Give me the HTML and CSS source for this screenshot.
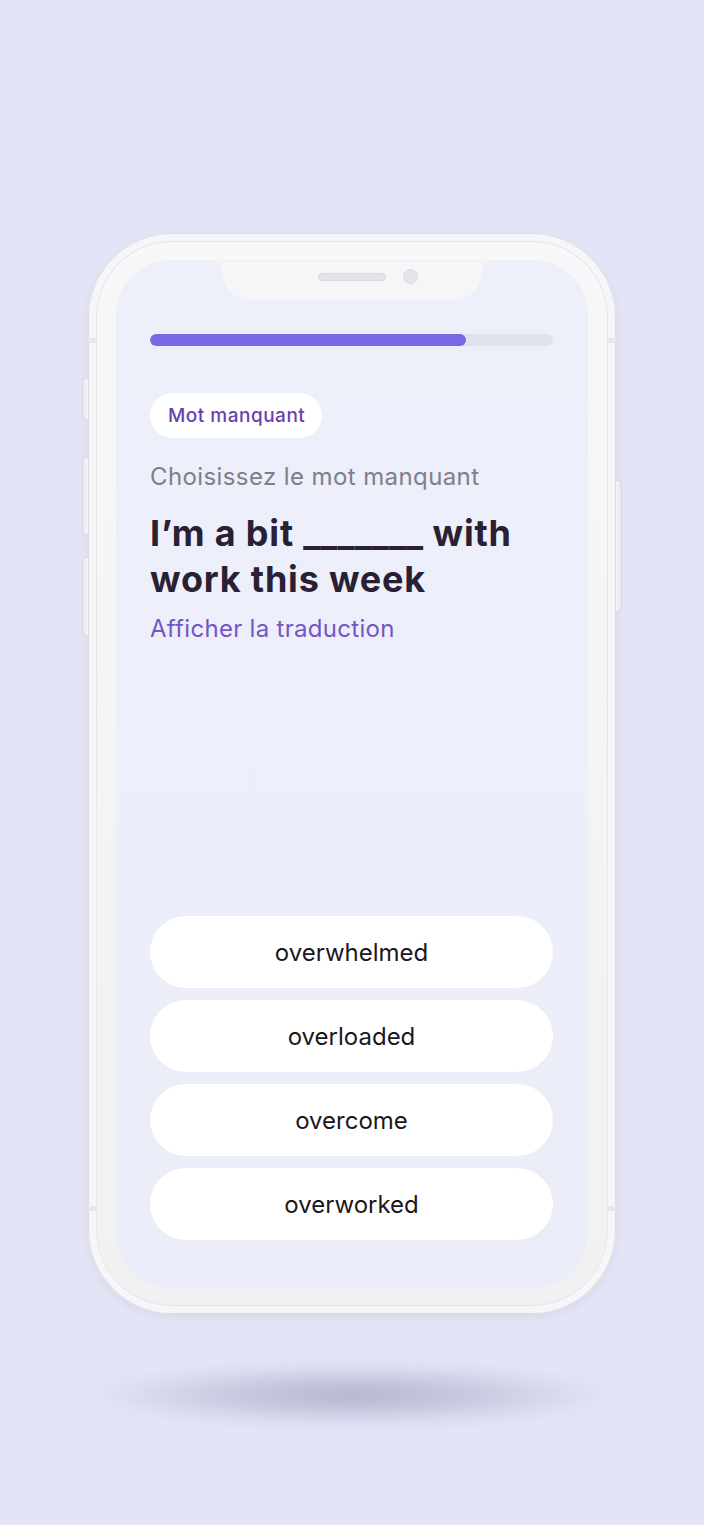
FILE: index.html
```html
<!DOCTYPE html>
<html lang="fr">
<head>
<meta charset="utf-8">
<title>Mot manquant</title>
<link rel="stylesheet" href="styles.css">
</head>
<body>
<div class="stage">
  <div class="phone">
    <span class="btn btn-mute"></span>
    <span class="btn btn-vol-up"></span>
    <span class="btn btn-vol-down"></span>
    <span class="btn btn-power"></span>
    <span class="band band-tl"></span>
    <span class="band band-tr"></span>
    <span class="band band-bl"></span>
    <span class="band band-br"></span>
    <div class="screen">
      <div class="notch">
        <span class="speaker"></span>
        <span class="camera"></span>
      </div>
      <div class="progress"><div class="progress-fill" style="width:78.4%"></div></div>
      <div class="badge">Mot manquant</div>
      <p class="prompt">Choisissez le mot manquant</p>
      <h1 class="sentence">I’m a bit <span class="blank">_______</span> with work this week</h1>
      <a class="translate">Afficher la traduction</a>
      <div class="options">
        <button class="option">overwhelmed</button>
        <button class="option">overloaded</button>
        <button class="option">overcome</button>
        <button class="option">overworked</button>
      </div>
    </div>
  </div>
  <div class="floor-shadow"></div>
</div>
</body>
</html>
```

FILE: styles.css
```css
* { box-sizing: border-box; }

html, body {
  margin: 0;
  padding: 0;
}

body {
  width: 704px;
  height: 1525px;
  background: #e3e4f6;
  font-family: Inter, "Noto Sans", "Liberation Sans", sans-serif;
  overflow: hidden;
}

.stage {
  display: flex;
  flex-direction: column;
  align-items: center;
  padding-top: 233px;
}

.phone {
  position: relative;
  width: 528px;
  height: 1081px;
  border-radius: 84px;
  background: linear-gradient(180deg, #f8f8fa 0%, #f4f4f6 50%, #f1f1f4 100%);
  padding: 28px 29px 26px 29px;
  box-shadow:
    inset 0 0 0 1px #dcdce3,
    inset 0 0 0 8px #f6f6f8,
    inset 0 0 0 9px #e6e6eb,
    0 3px 6px rgba(120, 122, 150, 0.12);
}

.btn {
  position: absolute;
  width: 6px;
  background: linear-gradient(90deg, #e9e9ee, #f6f6f8);
  border: 1px solid #d9d9e0;
}
.btn-mute { left: -6px; top: 145px; height: 42px; border-radius: 3px 0 0 3px; border-right: none; }
.btn-vol-up { left: -6px; top: 224px; height: 78px; border-radius: 3px 0 0 3px; border-right: none; }
.btn-vol-down { left: -6px; top: 324px; height: 79px; border-radius: 3px 0 0 3px; border-right: none; }
.btn-power { right: -6px; top: 247px; height: 132px; border-radius: 0 3px 3px 0; border-left: none; background: linear-gradient(90deg, #f4f4f6, #e6e6eb); }

.band {
  position: absolute;
  width: 9px;
  height: 5px;
  background: #e7e7ec;
}
.band-tl { left: 0; top: 105px; }
.band-tr { right: 0; top: 105px; }
.band-bl { left: 0; top: 973px; }
.band-br { right: 0; top: 973px; }

.screen {
  position: relative;
  height: 100%;
  border-radius: 54px;
  background: linear-gradient(180deg, #edeff9 0%, #eceef9 60%, #eaecf8 100%);
  padding: 73px 34px 48px 33px;
  display: flex;
  flex-direction: column;
  box-shadow: 0 0 0 1px #eeeef3;
}

.notch {
  position: absolute;
  top: 0;
  left: 105px;
  width: 260px;
  height: 39px;
  background: #f6f6f8;
  border-radius: 0 0 28px 28px;
  display: flex;
  align-items: flex-start;
  gap: 17px;
  padding: 8px 0 0 96px;
}
.notch::before,
.notch::after {
  content: "";
  position: absolute;
  top: 0;
  width: 10px;
  height: 10px;
}
.notch::before {
  left: -10px;
  background: radial-gradient(circle at 0 100%, transparent 9.5px, #f6f6f8 10px);
}
.notch::after {
  right: -10px;
  background: radial-gradient(circle at 100% 100%, transparent 9.5px, #f6f6f8 10px);
}

.speaker {
  width: 68px;
  height: 8px;
  margin-top: 4px;
  border-radius: 4px;
  background: #e4e4e9;
  border: 1px solid #d8d8de;
}
.camera {
  width: 15px;
  height: 15px;
  border-radius: 50%;
  background: #e6e6ea;
  border: 1px solid #d9d9df;
}

.progress {
  height: 12px;
  border-radius: 6px;
  background: #e1e2ee;
  overflow: hidden;
  flex-shrink: 0;
}
.progress-fill {
  height: 100%;
  border-radius: 6px;
  background: #7a67e5;
}

.badge {
  align-self: flex-start;
  margin-top: 47px;
  height: 45px;
  padding: 0 17px 0 18px;
  display: flex;
  align-items: center;
  border-radius: 23px;
  background: #ffffff;
  color: #6a3fae;
  font-size: 19px;
  font-weight: 500;
  letter-spacing: 0.5px;
}

.prompt {
  margin: 23px 0 0;
  font-size: 24px;
  line-height: 32px;
  color: #7e7f89;
  font-weight: 400;
  letter-spacing: 0.4px;
}

.sentence {
  margin: 17px 0 0;
  font-size: 36px;
  line-height: 46px;
  font-weight: 700;
  color: #2a2033;
  letter-spacing: 0.8px;
  max-width: 380px;
}
.blank {
  letter-spacing: 0;
}

.translate {
  margin-top: 11px;
  font-size: 24px;
  line-height: 32px;
  color: #7455c6;
  letter-spacing: 0.3px;
}

.options {
  margin-top: auto;
  display: flex;
  flex-direction: column;
  gap: 12px;
}

.option {
  height: 72px;
  border: none;
  border-radius: 36px;
  background: #ffffff;
  font-family: Inter, "Noto Sans", "Liberation Sans", sans-serif;
  font-size: 24px;
  font-weight: 400;
  color: #1b1720;
  padding: 0;
}

.floor-shadow {
  width: 520px;
  height: 64px;
  margin-top: 49px;
  border-radius: 50%;
  background: radial-gradient(closest-side, rgba(150, 152, 182, 0.62) 0%, rgba(160, 162, 190, 0.35) 55%, rgba(200, 202, 225, 0) 100%);
  filter: blur(6px);
}
```
